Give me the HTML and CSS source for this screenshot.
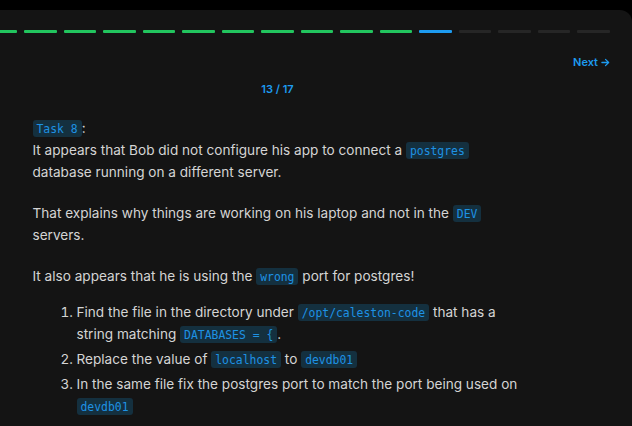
FILE: index.html
```html
<!DOCTYPE html>
<html lang="en">
<head>
<meta charset="utf-8">
<title>Task 8</title>
<link rel="stylesheet" href="styles.css">
</head>
<body>
<div class="card">
  <div class="progress">
    <span class="seg done"></span><span class="seg done"></span><span class="seg done"></span><span class="seg done"></span>
    <span class="seg done"></span><span class="seg done"></span><span class="seg done"></span><span class="seg done"></span>
    <span class="seg done"></span><span class="seg done"></span><span class="seg done"></span><span class="seg done"></span>
    <span class="seg current"></span>
    <span class="seg"></span><span class="seg"></span><span class="seg"></span><span class="seg"></span>
  </div>
  <div class="nav">
    <a class="next" href="#">Next
      <svg class="arrow" viewBox="0 0 10 10" width="9" height="9" aria-hidden="true"><path d="M1 5H8.5M5 1.5L8.5 5L5 8.5" fill="none" stroke="currentColor" stroke-width="1.4" stroke-linecap="round" stroke-linejoin="round"/></svg>
    </a>
  </div>
  <div class="counter">13 / 17</div>
  <div class="content">
    <p><code>Task 8</code>:<br>It appears that Bob did not configure his app to connect a <code>postgres</code> database running on a different server.</p>
    <p>That explains why things are working on his laptop and not in the <code>DEV</code> servers.</p>
    <p class="lead">It also appears that he is using the <code>wrong</code> port for postgres!</p>
    <ol>
      <li>Find the file in the directory under <code>/opt/caleston-code</code> that has a string matching <code>DATABASES = {</code>.</li>
      <li>Replace the value of <code>localhost</code> to <code>devdb01</code></li>
      <li>In the same file fix the postgres port to match the port being used on <code>devdb01</code></li>
    </ol>
  </div>
</div>
</body>
</html>
```
FILE: styles.css
```css
html, body {
  margin: 0;
  padding: 0;
  background: #000;
}
body {
  font-family: Inter, "Noto Sans", sans-serif;
  color: #d4d4d4;
  overflow: hidden;
}
.card {
  margin: 10px 0 0 -77px;
  background: #141414;
  border-top-right-radius: 12px;
  padding: 20px 22px 0 22px;
  min-height: 416px;
  box-sizing: border-box;
}
.progress {
  display: flex;
  gap: 6.8px;
}
.seg {
  flex: 1;
  height: 3px;
  border-radius: 1px;
  background: #262626;
}
.seg.done { background: #22c55e; }
.seg.current { background: #1d9bf0; }
.nav {
  display: flex;
  justify-content: flex-end;
  margin-top: 21px;
}
.next {
  display: flex;
  align-items: center;
  gap: 3px;
  font-size: 11px;
  font-weight: 600;
  line-height: 16px;
  color: #1d9bf0;
  text-decoration: none;
}
.arrow { display: block; }
.counter {
  text-align: center;
  font-size: 11px;
  font-weight: 600;
  line-height: 16px;
  color: #1d9bf0;
  margin-top: 11px;
}
.content {
  max-width: 490px;
  margin: 0 auto;
  padding-top: 20px;
  font-size: 13.6px;
  line-height: 22px;
}
.content p {
  margin: 0 0 19px 0;
}
.content p.lead {
  margin-bottom: 14px;
}
code {
  font-family: "DejaVu Sans Mono", "Liberation Mono", monospace;
  font-size: 11.4px;
  line-height: 12px;
  color: #1e92e4;
  background: #14303f;
  border-radius: 3px;
  padding: 2px 4px 1px;
}
.content ol {
  margin: 0;
  padding-left: 44px;
}
.content li {
  margin-bottom: 3px;
}
```
